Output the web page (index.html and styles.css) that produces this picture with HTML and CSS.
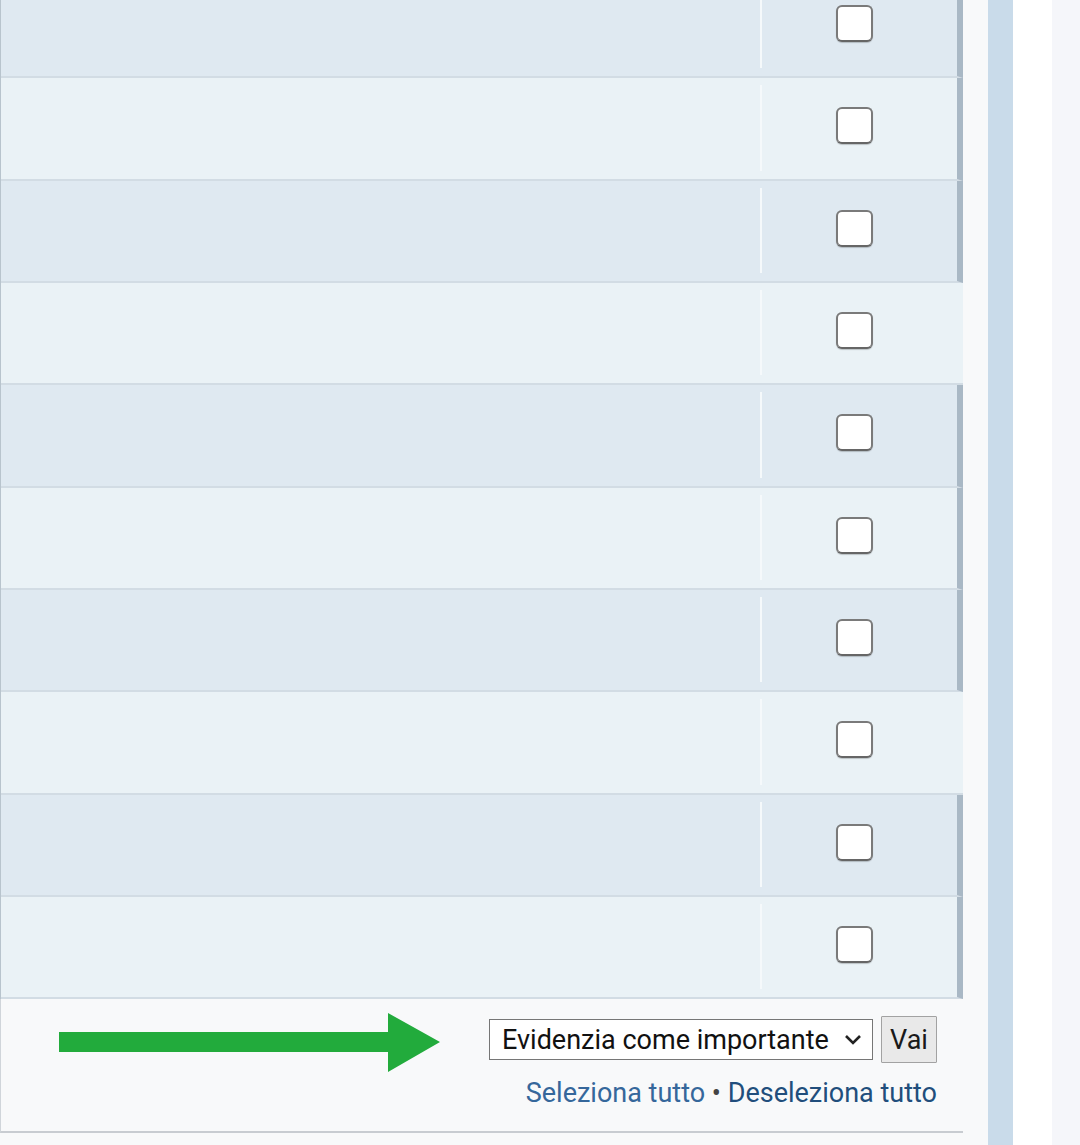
FILE: index.html
```html
<!DOCTYPE html>
<html lang="it">
<head>
    <meta charset="UTF-8">
    <meta name="viewport" content="width=device-width, initial-scale=1.0">
    <title>Osservati speciali</title>
    <link rel="stylesheet" href="styles.css">
</head>
<body>
    <div class="main">
        <div class="list">
            <div class="row dark flag"><div class="title"></div><div class="sep"></div><div class="check"><input type="checkbox"></div></div>
            <div class="row light flag"><div class="title"></div><div class="sep"></div><div class="check"><input type="checkbox"></div></div>
            <div class="row dark flag"><div class="title"></div><div class="sep"></div><div class="check"><input type="checkbox"></div></div>
            <div class="row light"><div class="title"></div><div class="sep"></div><div class="check"><input type="checkbox"></div></div>
            <div class="row dark flag"><div class="title"></div><div class="sep"></div><div class="check"><input type="checkbox"></div></div>
            <div class="row light flag"><div class="title"></div><div class="sep"></div><div class="check"><input type="checkbox"></div></div>
            <div class="row dark flag"><div class="title"></div><div class="sep"></div><div class="check"><input type="checkbox"></div></div>
            <div class="row light"><div class="title"></div><div class="sep"></div><div class="check"><input type="checkbox"></div></div>
            <div class="row dark flag"><div class="title"></div><div class="sep"></div><div class="check"><input type="checkbox"></div></div>
            <div class="row light flag"><div class="title"></div><div class="sep"></div><div class="check"><input type="checkbox"></div></div>
        </div>

        <div class="footer">
            <div class="actions">
                <svg class="arrow" width="382" height="60" viewBox="0 0 382 60">
                    <polygon points="0,19 329,19 329,0 381,29 329,59 329,39 0,39" fill="#22ab3c"/>
                </svg>
                <div class="controls">
                    <div class="select-wrap">
                        <select>
                            <option>Evidenzia come importante</option>
                            <option>Rimuovi evidenziazione</option>
                        </select>
                        <svg class="chevron" width="18" height="12" viewBox="0 0 18 12">
                            <polyline points="2,2 9,9 16,2" fill="none" stroke="#222" stroke-width="2.6"/>
                        </svg>
                    </div>
                    <button>Vai</button>
                </div>
            </div>
            <div class="links">
                <a href="#" class="sel">Seleziona tutto</a> <span class="dot">•</span> <a href="#" class="desel">Deseleziona tutto</a>
            </div>
        </div>
    </div>

    <div class="gap"></div>
    <div class="strip"></div>
    <div class="blank"></div>
    <div class="side"></div>
</body>
</html>
```

FILE: styles.css
```css
body {
    margin: 0;
    height: 1145px;
    overflow: hidden;
    display: flex;
    font-family: Roboto, "Noto Sans", Arial, sans-serif;
    background-color: #f8f9fa;
}
.main {
    width: 963px;
    flex: 0 0 963px;
    display: flex;
    flex-direction: column;
}
.list {
    margin-top: -24px;
    border-left: 1px solid #b8c4cd;
}
.row {
    display: flex;
    height: 102.33px;
    box-sizing: border-box;
    border-bottom: 2px solid #d2dce4;
}
.dark {
    background-color: #dfe9f1;
}
.light {
    background-color: #eaf2f6;
}
.flag {
    border-right: 6px solid #a9b8c5;
}
.title {
    flex: 0 0 759px;
}
.sep {
    width: 2px;
    margin: 7px 0 8px;
    background-color: #f5f9fb;
}
.check {
    flex: 1;
    padding: 29px 0 0 74px;
}
.check input {
    appearance: none;
    -webkit-appearance: none;
    margin: 0;
    width: 37px;
    height: 37px;
    box-sizing: border-box;
    border: 2px solid #7a7a7a;
    border-bottom-color: #666;
    border-radius: 6px;
    background: #fff;
    box-shadow: 0 1px 1px rgba(0, 0, 0, 0.2);
}
.footer {
    flex: 0 0 134px;
    box-sizing: border-box;
    padding: 14px 26px 0 58px;
    border-left: 1px solid #d0d5da;
    border-bottom: 2px solid #c8ccd1;
    background-color: #f8f9fa;
}
.actions {
    display: flex;
    justify-content: space-between;
    align-items: flex-start;
}
.arrow {
    display: block;
}
.controls {
    display: flex;
    align-items: center;
    gap: 8px;
    margin-top: 3px;
}
.select-wrap {
    position: relative;
}
select {
    appearance: none;
    -webkit-appearance: none;
    display: block;
    width: 384px;
    height: 41px;
    box-sizing: border-box;
    padding: 0 40px 0 12px;
    border: 1px solid #767676;
    border-radius: 0;
    background: #fff;
    color: #111;
    font-family: Roboto, "Noto Sans", Arial, sans-serif;
    font-size: 27px;
}
.chevron {
    position: absolute;
    right: 11px;
    top: 15px;
    pointer-events: none;
}
button {
    width: 56px;
    height: 47px;
    padding: 0;
    border: 1px solid #a2a2a2;
    border-radius: 1px;
    background: #e9e9e9;
    color: #1a1a1a;
    font-family: Roboto, "Noto Sans", Arial, sans-serif;
    font-size: 27px;
}
.links {
    margin-top: 4px;
    text-align: right;
    font-size: 27px;
    line-height: 32px;
}
.links a {
    text-decoration: none;
}
.sel {
    color: #35679b;
}
.desel {
    color: #214e7c;
}
.dot {
    color: #444;
}
.gap {
    flex: 0 0 25px;
}
.strip {
    flex: 0 0 25px;
    background-color: #c9dbea;
}
.blank {
    flex: 0 0 39px;
    background-color: #fff;
}
.side {
    flex: 1;
    background-color: #f5f6fa;
}
```
